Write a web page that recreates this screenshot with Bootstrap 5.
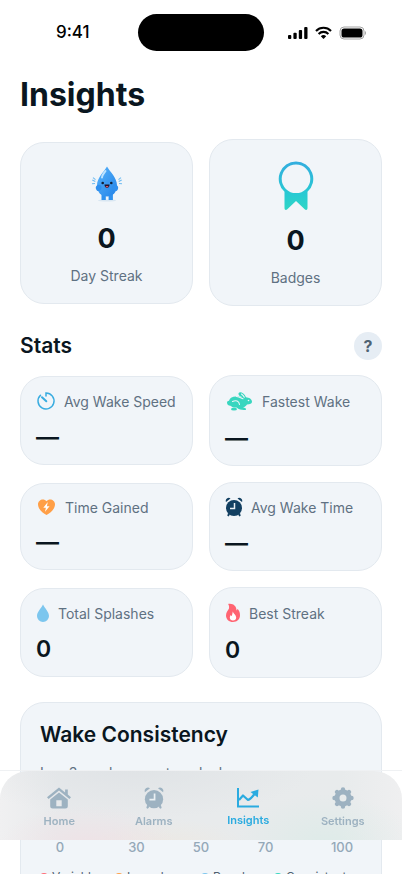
<!DOCTYPE html>
<html lang="en">
<head>
<meta charset="utf-8">
<meta name="viewport" content="width=device-width, initial-scale=1">
<title>Insights</title>
<link href="https://cdn.jsdelivr.net/npm/bootstrap@5.3.0/dist/css/bootstrap.min.css" rel="stylesheet">
<style>
body{font-family:Inter,"Liberation Sans",sans-serif;color:#0a1620;background:#fff}
.screen{overflow-y:auto;scrollbar-width:none}
.status{height:65px;padding:0 36px 0 56px}
.clock{font-size:17px;font-weight:500;color:#000}
.island{width:126px;height:37px;left:50%;top:14px;transform:translateX(-50%)}
.page-title{font-size:32px;font-weight:700;line-height:40px;margin:10px 0 24px}
.tile{background:#f1f5f9;border:1px solid #e3e9ef;border-radius:24px}
.hero{padding:19px}
.hero-num{font-size:27px;font-weight:700;line-height:33px;margin:12px 0}
.muted{color:#5f7182;font-size:14px;line-height:17px}
.head{font-size:21px;font-weight:600;line-height:28px;margin:0}
.section-row{margin:26px 0 15px}
.help{width:28px;height:28px;background:#e6edf4;color:#4f6374;font-size:16px;font-weight:700;line-height:28px}
.stat{padding:14px 15px 12px}
.stat-num{font-size:23px;font-weight:600;line-height:29px;margin-top:12px}
.panel{padding:18px 0}
.inset{padding:0 19px}
.hint{margin-top:15px}
.ticks{display:grid;grid-template-columns:78fr 75fr 54fr 75fr 78fr;margin-top:57px;font-size:13px;line-height:18px;color:#94a8b8;font-weight:500}
.legend{display:grid;grid-template-columns:75fr 86fr 73fr 88fr;font-size:12px;line-height:16px;color:#4f6070;margin-top:13px}
.dot{width:8px;height:8px}
.dock-wrap{position:fixed;left:0;right:0;bottom:34px;border-top:1px solid #eff1f3}
.dock{height:69px;padding:0 12px;border-radius:28px 28px 0 0;background:
 radial-gradient(ellipse 90px 40px at 22% 108%,rgba(243,221,226,.6),transparent),
 radial-gradient(ellipse 80px 30px at 42% 112%,rgba(241,232,218,.5),transparent),
 radial-gradient(ellipse 90px 50px at 81% 105%,rgba(218,235,231,.7),transparent),
 radial-gradient(ellipse 180px 55px at 34% -10%,rgba(221,225,228,.8),transparent),
 linear-gradient(90deg,#f0f0f1 0,#e8eaec 14%,#e8ebec 85%,#efeff0 100%)}
.tab{color:#9db2c1;font-size:11px;line-height:14px;font-weight:600;text-decoration:none;padding-top:15px;gap:4px}
.tab.on{color:#2aabe0}
</style>
</head>
<body>
<div class="screen vh-100">
<header class="status d-flex align-items-center justify-content-between position-relative">
  <span class="clock">9:41</span>
  <div class="island bg-black rounded-pill position-absolute"></div>
  <svg width="78" height="14" viewBox="0 0 78 14" aria-hidden="true">
    <g fill="#000"><rect y="9" width="3.3" height="4" rx="1"/><rect x="5.4" y="6.7" width="3.3" height="6.3" rx="1"/><rect x="10.8" y="4" width="3.3" height="9" rx="1"/><rect x="16.2" y="1" width="3.3" height="12" rx="1"/></g>
    <g fill="none" stroke="#000" stroke-width="2.1"><path d="M28 4.900a10.500 10.500 0 0 1 15 0M30.600 7.900a7 7 0 0 1 9.800 0"/></g><path d="M35.500 13l-2.700-2.800a4 4 0 0 1 5.400 0z"/>
    <rect x="52" y="1" width="24" height="12" rx="4" fill="none" stroke="#a4a4a4"/><rect x="53.500" y="2.500" width="21" height="9" rx="2.600"/><path d="M77 5v4q1-.6 1-2t-1-2z" fill="#a4a4a4"/>
  </svg>
</header>
<main class="px-3 mx-1">
  <h1 class="page-title">Insights</h1>
  <div class="row gx-3 align-items-center">
    <div class="col-6"><section class="tile hero text-center d-flex flex-column align-items-center">
      <svg width="48" height="48" viewBox="0 0 48 48" aria-hidden="true">
        <defs><linearGradient id="drop" x1="0" y1="0" x2="1" y2="1"><stop stop-color="#58b4fb"/><stop offset="1" stop-color="#2383e8"/></linearGradient></defs>
        <ellipse cx="24" cy="38.500" rx="9" ry="1" fill="#d8e6f2"/>
        <path d="M18.500 31h4.300v7h-4.300zM25.600 31h4.300v7h-4.300z" fill="#2f91ee"/>
        <path d="M24 4.500C21 10 14 15.500 14 23.500c0 7 4.500 11 10 11s10-4 10-11C34 15.500 27 10 24 4.500z" fill="url(#drop)"/>
        <path d="M13 27c-1-3 2-5 4-4 2.500 1 2 5-1 6-1.500.5-2.500-.7-3-2zM35 27c1-3-2-5-4-4-2.500 1-2 5 1 6 1.500.5 2.500-.7 3-2z" fill="#2f8fee"/>
        <path d="M22.500 9c-2 3-3.500 4-3.500 6.500" stroke="#bfe4ff" stroke-width="2" stroke-linecap="round" fill="none"/>
        <circle cx="19.700" cy="21" r="1.300" fill="#10203a"/><circle cx="28.300" cy="21" r="1.300" fill="#10203a"/>
        <path d="M21.500 22.500h5c0 4.600-5 4.600-5 0z" fill="#241428"/><path d="M22.500 24.500q1.500-1 3 0-1.500 2.200-3 0z" fill="#f2667c"/>
        <path d="M9.300 18l3 1.500M10 15.600l2.500 2M9 21.800l3-.3M38.700 18l-3 1.500M38 15.600l-2.500 2M39 21.800l-3-.3" stroke="#6fbcf2" stroke-width="1.100"/>
      </svg>
      <div class="hero-num">0</div><div class="muted">Day Streak</div>
    </section></div>
    <div class="col-6"><section class="tile hero text-center d-flex flex-column align-items-center">
      <svg width="40" height="53" viewBox="0 0 40 53" aria-hidden="true">
        <defs><linearGradient id="rib" x1="0" y1="0" x2="0" y2="1"><stop stop-color="#33addf"/><stop offset=".7" stop-color="#28cbd2"/><stop offset="1" stop-color="#2fd6c4"/></linearGradient></defs>
        <path fill="url(#rib)" fill-rule="evenodd" d="M20 2.500a17.300 17.300 0 0 1 11.500 30.200V49c0 2-1.500 2.500-2.800 1.300L20 42l-8.700 8.300C10 51.500 8.500 51 8.500 49V32.700A17.300 17.300 0 0 1 20 2.500zm0 3a14.300 14.300 0 1 0 0 28.600 14.300 14.300 0 0 0 0-28.600z"/>
      </svg>
      <div class="hero-num">0</div><div class="muted">Badges</div>
    </section></div>
  </div>
  <div class="section-row d-flex justify-content-between align-items-center">
    <h2 class="head">Stats</h2>
    <button type="button" class="help btn rounded-circle border-0 p-0" aria-label="About stats">?</button>
  </div>
  <div class="row g-3 align-items-center">
    <div class="col-6"><section class="tile stat">
      <div class="d-flex align-items-center gap-2 muted"><svg width="20" height="20" viewBox="0 0 20 20" fill="none" stroke="#38ace0" stroke-width="1.500" stroke-linecap="round" aria-hidden="true"><path d="M10 5V2a8 8 0 1 1-5.500 2.200"/><path d="M6 6.300l4.300 4" stroke-width="2"/></svg><span>Avg Wake Speed</span></div>
      <div class="stat-num">—</div>
    </section></div>
    <div class="col-6"><section class="tile stat">
      <div class="d-flex align-items-center gap-2 muted"><svg width="29" height="22" viewBox="0 0 29 22" aria-hidden="true">
        <g fill="#38d6bf"><path d="M2 12.500c0-1 1-1.700 2-1.800C5 7.500 8 6.300 11.500 6.500c3 0 4.500.7 6 .8-2.500-.7-4.500-2.300-4-4C14.500 1 19 2.500 21 7.300c3 .2 6 1.700 6 4.500 0 2-2 2.700-5 2.700-1 1.500-2 2.300-4 3 2 0 3.500 1 3 2.200-2 .7-6.500.3-9.500-2.200-1.500.3-4.500 0-6-1.700-1.500.2-3.500-1-3.500-3.300z"/><ellipse cx="9" cy="19.200" rx="3" ry="1.400"/></g>
        <path d="M7.500 11.500c3.500-1.700 6.500-.5 7 3M11.500 6.500c3.500.5 5 2 6.500 2.300M16.500 4c1.500 1 2.300 2 2.800 3.300" fill="none" stroke="#f1f5f9" stroke-width="1.100" stroke-linecap="round"/><circle cx="23.500" cy="10.500" r=".8" fill="#f1f5f9"/></svg><span>Fastest Wake</span></div>
      <div class="stat-num">—</div>
    </section></div>
    <div class="col-6"><section class="tile stat">
      <div class="d-flex align-items-center gap-2 muted"><svg width="21" height="18" viewBox="0 0 21 18" aria-hidden="true"><path fill="#ff9f47" d="M10.500 17C7 15 2 11.500 2 6.300 2 2 7.500-.5 10.500 3.200 13.500-.5 19 2 19 6.300 19 11.500 14 15 10.500 17z"/><path fill="#fff" d="M11.800 4L7.300 9.700h2.600l-.9 4 4.600-5.500h-2.700z"/></svg><span>Time Gained</span></div>
      <div class="stat-num">—</div>
    </section></div>
    <div class="col-6"><section class="tile stat">
      <div class="d-flex align-items-center gap-2 muted"><svg width="18" height="20" viewBox="0 0 18 20" fill="#123f61" aria-hidden="true"><g id="alarm"><circle cx="9" cy="11" r="8"/><path d="M1 5a3 3 0 0 1 4.500-3.600zM17 5a3 3 0 0 0-4.500-3.600zM3 16l2 1.600L3.600 19.500l-1.300-.8zM15 16l-2 1.600 1.400 1.900 1.300-.8z"/><path d="M9.500 6v5.500H5" fill="none" stroke="#eaf0f4" stroke-width="1.500"/></g></svg><span>Avg Wake Time</span></div>
      <div class="stat-num">—</div>
    </section></div>
    <div class="col-6"><section class="tile stat">
      <div class="d-flex align-items-center gap-2 muted"><svg width="14" height="20" viewBox="0 0 14 20" aria-hidden="true"><path fill="#7cc6ee" d="M7 1.500C5 5.500 1 9 1 13a6 6 0 0 0 12 0C13 9 9 5.500 7 1.500z"/></svg><span>Total Splashes</span></div>
      <div class="stat-num">0</div>
    </section></div>
    <div class="col-6"><section class="tile stat">
      <div class="d-flex align-items-center gap-2 muted"><svg width="16" height="22" viewBox="0 0 16 22" aria-hidden="true"><path fill="#ff6472" d="M3 2c5-1 8.500 2 8.500 6.500l1.200-1.400C14.500 9 15 11 15 13.300c0 4-3 6.700-7 6.700s-7-2.700-7-6.500C1 10 3 8.500 4 6.500 4.300 4.500 4 3 3 2z"/><path fill="#fff" d="M7.800 9.500c.4 2 3.400 3.500 3.400 6 0 2-1.300 3-3.200 3s-3.200-1-3.200-3c0-1 .4-2 1-2.600.2.700.6 1 1 1.200.6-1.500.6-3 1-4.600z"/></svg><span>Best Streak</span></div>
      <div class="stat-num">0</div>
    </section></div>
  </div>
  <section class="tile panel mt-4">
    <h2 class="head inset">Wake Consistency</h2>
    <div class="muted inset hint">Log 3 weeks more to unlock</div>
    <div class="ticks text-center"><span>0</span><span>30</span><span>50</span><span>70</span><span>100</span></div>
    <div class="legend inset">
      <span class="d-flex align-items-center gap-1"><i class="dot rounded-circle" style="background:#ff6b76"></i>Variable</span>
      <span class="d-flex align-items-center gap-1"><i class="dot rounded-circle" style="background:#ff9f47"></i>Irregular</span>
      <span class="d-flex align-items-center gap-1"><i class="dot rounded-circle" style="background:#7cc6ee"></i>Regular</span>
      <span class="d-flex align-items-center gap-1"><i class="dot rounded-circle" style="background:#38d6bf"></i>Consistent</span>
    </div>
  </section>
</main>
</div>
<div class="dock-wrap"><nav class="dock d-flex" aria-label="Main">
  <a href="#" class="tab flex-fill w-25 d-flex flex-column align-items-center"><svg width="26" height="24" viewBox="0 0 26 24" fill="currentColor" aria-hidden="true"><path d="M13 1.500L1 11.300l1.600 1.700L13 4.600 23.400 13l1.600-1.700-3.200-2.700V3.500h-2.700v2.900z"/><path fill-rule="evenodd" d="M13 6.500L4.200 13.600V20a2.500 2.500 0 0 0 2.500 2.500h12.600a2.500 2.500 0 0 0 2.500-2.500v-6.400zm-2.700 7.800h5.400v6h-5.400z"/></svg>Home</a>
  <a href="#" class="tab flex-fill w-25 d-flex flex-column align-items-center"><svg width="22" height="24" viewBox="-.5 -.5 19 21" fill="currentColor" aria-hidden="true"><use href="#alarm"/></svg>Alarms</a>
  <a href="#" class="tab on flex-fill w-25 d-flex flex-column align-items-center" aria-current="page"><svg width="24" height="23" viewBox="0 0 24 23" aria-hidden="true"><path d="M2 2v18.500h21" fill="none" stroke="currentColor" stroke-width="2"/><path d="M3 14l4-4.500 5 4.500c1.500-.3 5-4 6.500-6" fill="none" stroke="currentColor" stroke-width="2.200" stroke-linejoin="round"/><path d="M14.500 6l8-2.500-.7 8z" fill="currentColor"/></svg>Insights</a>
  <a href="#" class="tab flex-fill w-25 d-flex flex-column align-items-center"><svg width="24" height="24" viewBox="0 0 24 24" aria-hidden="true" fill="none" stroke="currentColor"><circle cx="12" cy="12" r="6" stroke-width="5"/><path d="M12 3.500v2M12 18.500v2M3.500 12h2M18.500 12h2M6 6l1.400 1.400M16.600 16.600l1.400 1.400M6 18l1.400-1.400M16.600 7.400l1.400-1.400" stroke-width="4.400" stroke-linecap="round"/></svg>Settings</a>
</nav></div>
<script src="https://cdn.jsdelivr.net/npm/bootstrap@5.3.0/dist/js/bootstrap.bundle.min.js"></script>
</body>
</html>
